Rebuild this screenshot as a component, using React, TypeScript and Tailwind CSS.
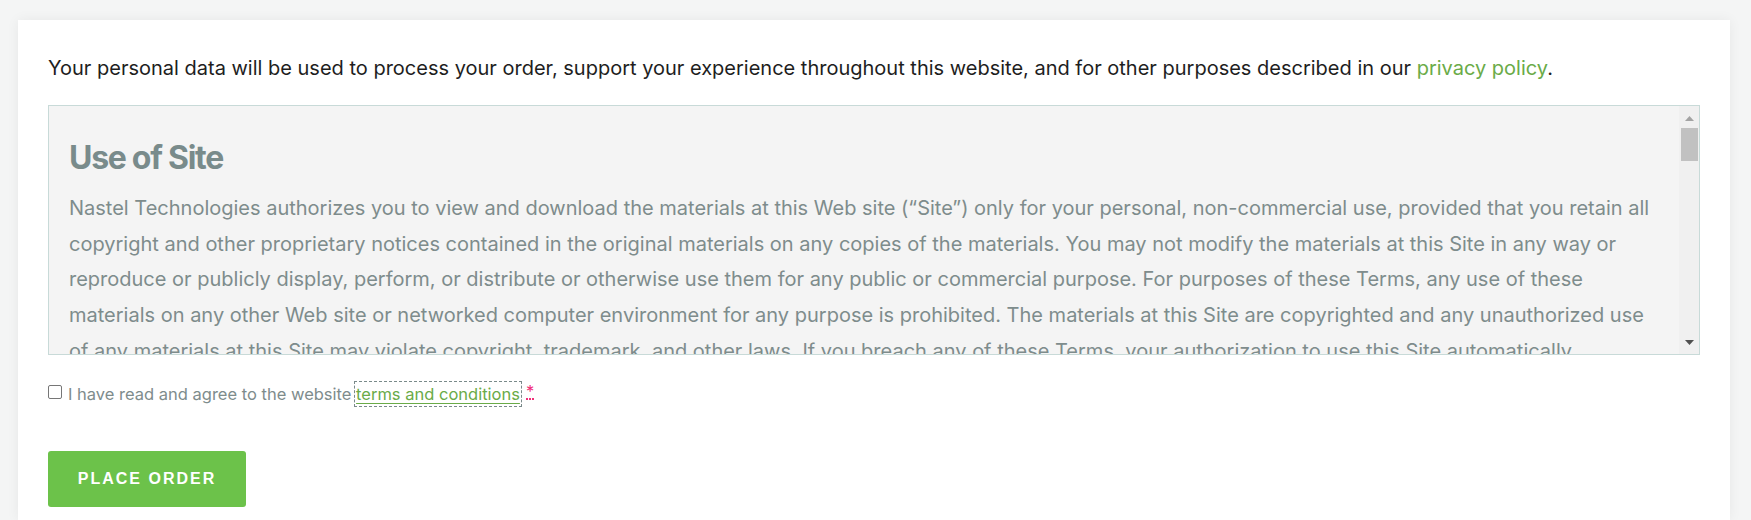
import React from "react";

const bodyLines = [
  "Nastel Technologies authorizes you to view and download the materials at this Web site (“Site”) only for your personal, non-commercial use, provided that you retain all",
  "copyright and other proprietary notices contained in the original materials on any copies of the materials. You may not modify the materials at this Site in any way or",
  "reproduce or publicly display, perform, or distribute or otherwise use them for any public or commercial purpose. For purposes of these Terms, any use of these",
  "materials on any other Web site or networked computer environment for any purpose is prohibited. The materials at this Site are copyrighted and any unauthorized use",
  "of any materials at this Site may violate copyright, trademark, and other laws. If you breach any of these Terms, your authorization to use this Site automatically",
  "terminates and you must immediately destroy any downloaded or printed materials.",
];

export default function App() {
  return (
    <div
      className="h-[520px] w-full bg-[#f4f5f5] pt-[20px] pl-[18px] pr-[21px] overflow-hidden"
      style={{ fontFamily: "Inter, 'Noto Sans', sans-serif" }}
    >
      <div className="h-full bg-white shadow-[0_0_12px_rgba(0,0,0,0.06)] px-[30px] pt-[33px]">
        <p className="text-[20px] leading-[30px] text-[#1e1e1e]">
          Your personal data will be used to process your order, support your experience throughout this website, and for other purposes described in our{" "}
          <a className="text-[#6aab48]">privacy policy</a>.
        </p>

        <div className="mt-[22px] h-[250px] border border-[#c8dad8] bg-[#f4f4f4] flex">
          <div className="flex-1 overflow-hidden pl-[20px] pt-[33px]">
            <h2 className="text-[32px] leading-[38px] font-bold tracking-[-0.04em] text-[#798b8b]">
              Use of Site
            </h2>
            <div className="mt-[14px] text-[20px] leading-[35.7px] text-[#7e8c8c]">
              {bodyLines.map((l, i) => (
                <div key={i} className="whitespace-nowrap">
                  {l}
                </div>
              ))}
            </div>
          </div>
          <div className="w-[20px] bg-[#f0f0f0] flex flex-col items-center">
            <div className="h-[22px] w-full flex items-center justify-center pt-[2px]">
              <svg width="9" height="5" viewBox="0 0 9 5">
                <path d="M4.5 0 L9 5 L0 5 Z" fill="#a3a3a3" />
              </svg>
            </div>
            <div className="w-[17px] h-[33px] bg-[#c1c1c1]" />
            <div className="flex-1" />
            <div className="h-[22px] w-full flex items-center justify-center pb-[2px]">
              <svg width="9" height="5" viewBox="0 0 9 5">
                <path d="M0 0 L9 0 L4.5 5 Z" fill="#505050" />
              </svg>
            </div>
          </div>
        </div>

        <div className="mt-[28px] flex items-center text-[16.5px] leading-[22px] text-[#7e8c8c]">
          <span className="inline-block w-[14px] h-[14px] border border-[#767676] rounded-[2px] bg-white mr-[6px] -mt-[4px]" />
          <span>I have read and agree to the website&nbsp;</span>
          <a className="text-[#6aab48] underline decoration-[#6aab48] underline-offset-[3px] outline-1 outline-dashed outline-[#7a8a8a] outline-offset-[1px]">
            terms and conditions
          </a>
          <abbr className="ml-[6px] text-[#f0307a] no-underline border-b-2 border-dotted border-[#f0307a] leading-[14px] self-start mt-[1px]">*</abbr>
        </div>

        <button
          className="mt-[46px] w-[198px] h-[56px] rounded-[3px] bg-[#6cc24a] text-white text-[16px] font-bold tracking-[2px] uppercase"
          style={{ fontFamily: "'Liberation Sans', Arial, sans-serif" }}
        >
          Place Order
        </button>
      </div>
    </div>
  );
}
